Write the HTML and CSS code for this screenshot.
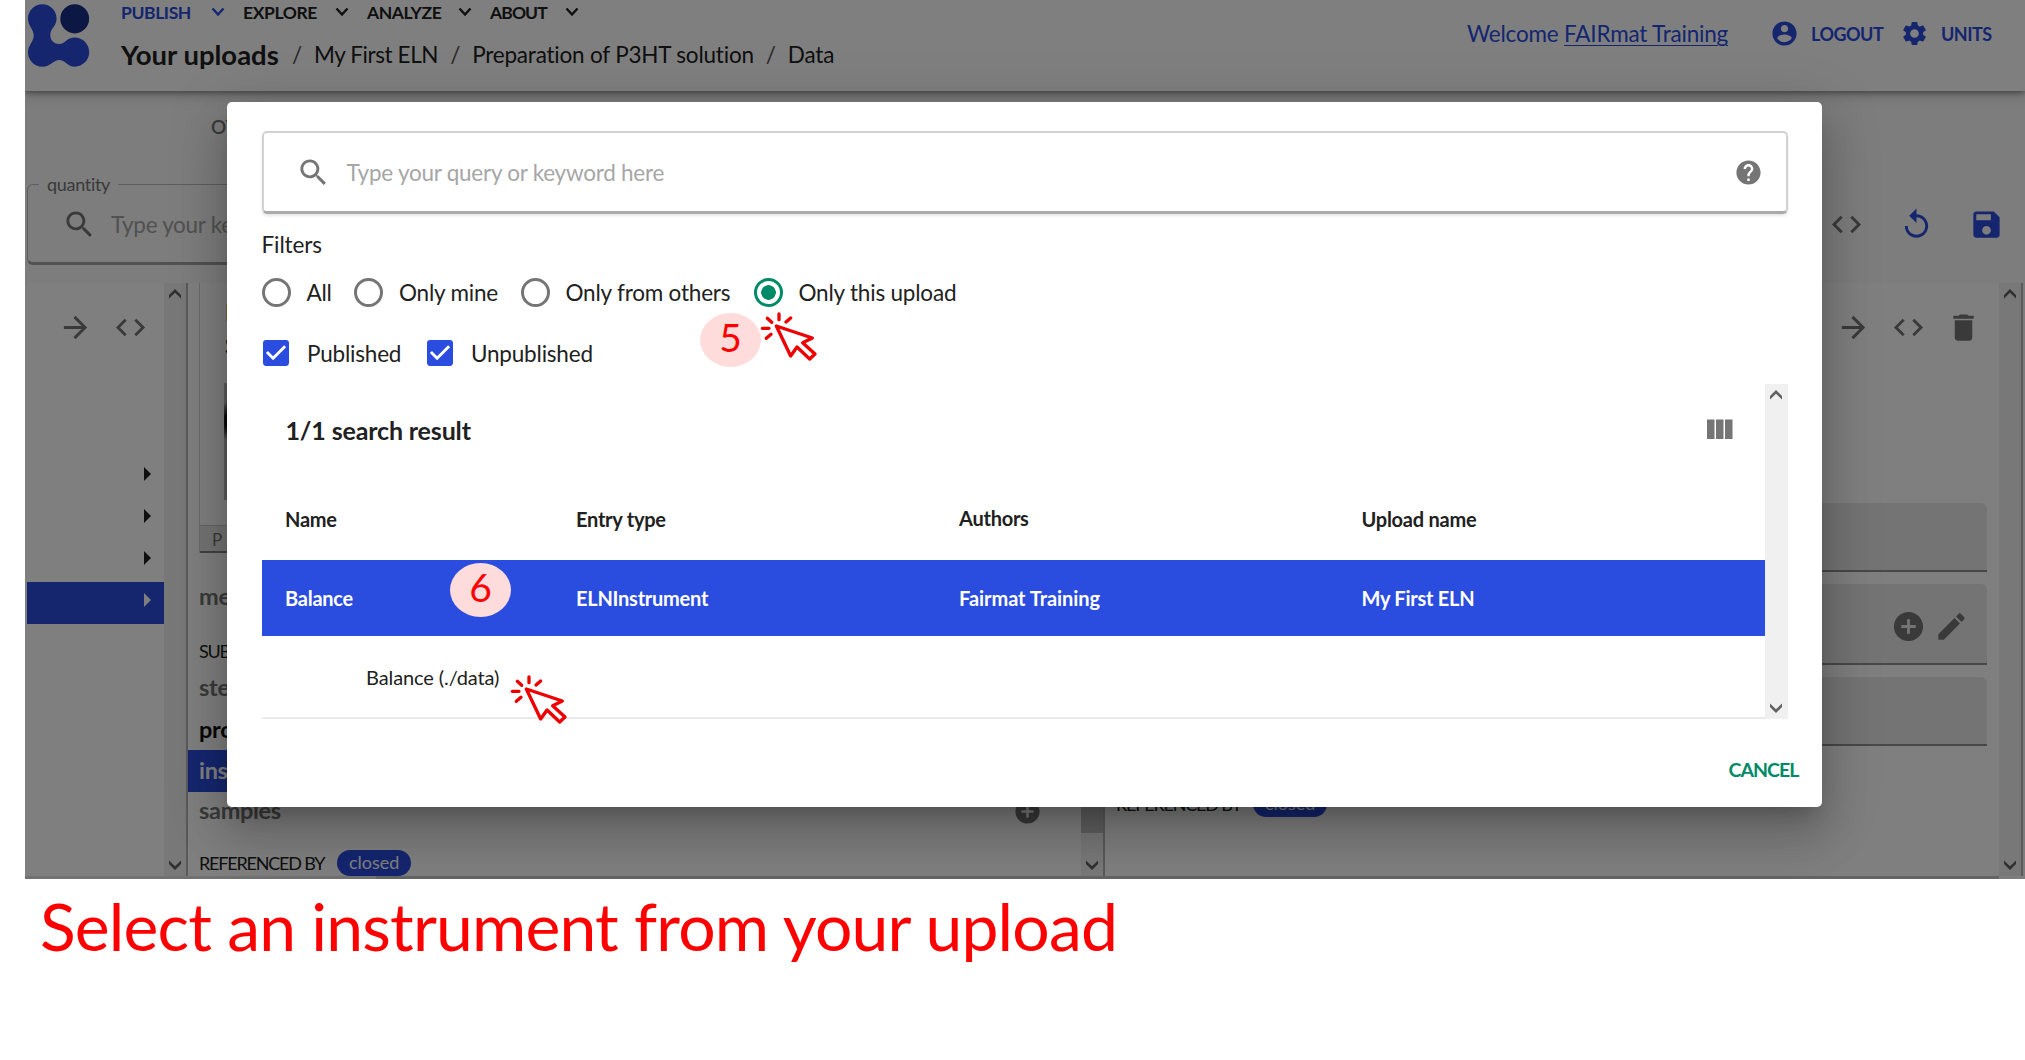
FILE: index.html
```html
<!DOCTYPE html>
<html lang="en">
<head>
<meta charset="utf-8">
<title>Select an instrument</title>
<link rel="stylesheet" href="styles.css">
</head>
<body>
<svg width="0" height="0" class="defs" aria-hidden="true">
  <symbol id="search" viewBox="0 0 24 24"><path d="M15.5 14h-.79l-.28-.27C15.41 12.59 16 11.11 16 9.5 16 5.91 13.09 3 9.5 3S3 5.91 3 9.5 5.91 16 9.5 16c1.61 0 3.09-.59 4.23-1.57l.27.28v.79l5 4.99L20.49 19l-4.99-5zm-6 0C7.01 14 5 11.99 5 9.5S7.01 5 9.5 5 14 7.01 14 9.5 11.99 14 9.5 14z"/></symbol>
  <symbol id="help" viewBox="0 0 24 24"><path d="M12 2C6.48 2 2 6.48 2 12s4.48 10 10 10 10-4.48 10-10S17.52 2 12 2zm1 17h-2v-2h2v2zm2.07-7.75l-.9.92C13.45 12.9 13 13.5 13 15h-2v-.5c0-1.1.45-2.1 1.17-2.83l1.24-1.26c.37-.36.59-.86.59-1.41 0-1.1-.9-2-2-2s-2 .9-2 2H8c0-2.21 1.79-4 4-4s4 1.79 4 4c0 .88-.36 1.68-.93 2.25z"/></symbol>
  <symbol id="account" viewBox="0 0 24 24"><path d="M12 2C6.48 2 2 6.48 2 12s4.48 10 10 10 10-4.48 10-10S17.52 2 12 2zm0 3c1.66 0 3 1.34 3 3s-1.34 3-3 3-3-1.34-3-3 1.34-3 3-3zm0 14.2c-2.5 0-4.71-1.28-6-3.22.03-1.99 4-3.08 6-3.08 1.99 0 5.97 1.09 6 3.08-1.29 1.94-3.5 3.22-6 3.22z"/></symbol>
  <symbol id="gear" viewBox="0 0 24 24"><path d="M19.14 12.94c.04-.3.06-.61.06-.94 0-.32-.02-.64-.07-.94l2.03-1.58c.18-.14.23-.41.12-.61l-1.92-3.32c-.12-.22-.37-.29-.59-.22l-2.39.96c-.5-.38-1.03-.7-1.62-.94l-.36-2.54c-.04-.24-.24-.41-.48-.41h-3.84c-.24 0-.43.17-.47.41l-.36 2.54c-.59.24-1.13.57-1.62.94l-2.39-.96c-.22-.08-.47 0-.59.22L2.74 8.87c-.12.21-.08.47.12.61l2.03 1.58c-.05.3-.09.63-.09.94s.02.64.07.94l-2.03 1.58c-.18.14-.23.41-.12.61l1.92 3.32c.12.22.37.29.59.22l2.39-.96c.5.38 1.03.7 1.62.94l.36 2.54c.05.24.24.41.48.41h3.84c.24 0 .44-.17.47-.41l.36-2.54c.59-.24 1.13-.56 1.62-.94l2.39.96c.22.08.47 0 .59-.22l1.92-3.32c.12-.22.07-.47-.12-.61l-2.01-1.58zM12 15.6c-1.98 0-3.6-1.62-3.6-3.6s1.62-3.6 3.6-3.6 3.6 1.62 3.6 3.6-1.62 3.6-3.6 3.6z"/></symbol>
  <symbol id="code" viewBox="0 0 24 24"><path d="M9.4 16.6L4.8 12l4.6-4.6L8 6l-6 6 6 6 1.4-1.4zm5.2 0l4.6-4.6-4.6-4.6L16 6l6 6-6 6-1.4-1.4z"/></symbol>
  <symbol id="replay" viewBox="0 0 24 24"><path d="M12 5V1L7 6l5 5V7c3.31 0 6 2.69 6 6s-2.69 6-6 6-6-2.69-6-6H4c0 4.42 3.58 8 8 8s8-3.58 8-8-3.58-8-8-8z"/></symbol>
  <symbol id="save" viewBox="0 0 24 24"><path d="M17 3H5c-1.11 0-2 .9-2 2v14c0 1.1.89 2 2 2h14c1.1 0 2-.9 2-2V7l-4-4zm-5 16c-1.66 0-3-1.34-3-3s1.34-3 3-3 3 1.34 3 3-1.34 3-3 3zm3-10H5V5h10v4z"/></symbol>
  <symbol id="arrow" viewBox="0 0 24 24"><path d="M12 4l-1.41 1.41L16.17 11H4v2h12.17l-5.58 5.59L12 20l8-8z"/></symbol>
  <symbol id="trash" viewBox="0 0 24 24"><path d="M6 19c0 1.1.9 2 2 2h8c1.1 0 2-.9 2-2V7H6v12zM19 4h-3.5l-1-1h-5l-1 1H5v2h14V4z"/></symbol>
  <symbol id="add" viewBox="0 0 24 24"><path d="M12 2C6.48 2 2 6.48 2 12s4.48 10 10 10 10-4.48 10-10S17.52 2 12 2zm5 11h-4v4h-2v-4H7v-2h4V7h2v4h4v2z"/></symbol>
  <symbol id="edit" viewBox="0 0 24 24"><path d="M3 17.25V21h3.75L17.81 9.94l-3.75-3.75L3 17.25zM20.71 7.04c.39-.39.39-1.02 0-1.41l-2.34-2.34c-.39-.39-1.02-.39-1.41 0l-1.83 1.83 3.75 3.75 1.83-1.83z"/></symbol>
  <symbol id="columns" viewBox="0 0 24 24"><path d="M10 18h5V5h-5v13zm-6 0h5V5H4v13zM16 5v13h5V5h-5z"/></symbol>
  <symbol id="checkbox" viewBox="3 3 18 18"><path d="M19 3H5c-1.11 0-2 .9-2 2v14c0 1.1.89 2 2 2h14c1.11 0 2-.9 2-2V5c0-1.1-.89-2-2-2zm-9 14l-5-5 1.41-1.41L10 14.17l7.59-7.59L19 8l-9 9z"/></symbol>
  <symbol id="down" viewBox="0 0 14 10"><path d="M1.500 1.500L7 7.500l5.500-6" fill="none" stroke="currentColor" stroke-width="2.400"/></symbol>
  <symbol id="sb-up" viewBox="0 0 12 10"><path d="M0 6L6 0l6 6v3.500L6 3.800 0 9.500z"/></symbol>
  <symbol id="sb-down" viewBox="0 0 12 10"><path d="M0 .5l6 5.700L12 .5V4L6 10 0 4z"/></symbol>
  <symbol id="click" viewBox="0 0 210 180"><g fill="none" stroke="#ee0000" stroke-width="10" stroke-linecap="round" stroke-linejoin="round"><path d="M64 63L172 99l-29 14 37 34-16 15-38-36-19 27z"/><path d="M72 27v17M93 51l14-12M37 40l13 12M22 70h20M34 100l14-12"/></g></symbol>
</svg>

<div class="screen">
  <div class="app">
    <header class="topbar">
      <svg class="logo" viewBox="0 0 62 63"><ellipse cx="46.700" cy="14.800" rx="14.400" ry="14.600" fill="#192e86"/><path fill="#2a4cdf" d="M14.300.2C22.300.2 28.600 6.600 28.600 14.500c0 8-6.300 9.500-6.300 16.500 0 6 4.500 9 9 9 6 0 7.200-6.500 15.400-6.500 8 0 14.500 6.500 14.500 14.600S54.700 62.700 46.700 62.700c-7 0-10-6.700-15.400-6.700s-9 6.700-17 6.700S0 56.200 0 48.200C0 41 5.700 38 5.700 31.500 5.700 25 0 22 0 14.500 0 6.600 6.400.2 14.300.2z"/></svg>
      <div class="titles">
        <nav class="menu">
          <a class="m1 on">PUBLISH<svg><use href="#down"/></svg></a>
          <a class="m2">EXPLORE<svg><use href="#down"/></svg></a>
          <a class="m3">ANALYZE<svg><use href="#down"/></svg></a>
          <a class="m4">ABOUT<svg><use href="#down"/></svg></a>
        </nav>
        <div class="crumbs"><b>Your uploads</b><i>/</i><span class="eln">My First ELN</span><i>/</i><span>Preparation of P3HT solution</span><i>/</i><span>Data</span></div>
      </div>
      <div class="account">
        <span class="welcome">Welcome <u>FAIRmat Training</u></span>
        <svg class="ico29"><use href="#account"/></svg><b class="logout">LOGOUT</b>
        <svg class="ico29"><use href="#gear"/></svg><b>UNITS</b>
      </div>
    </header>
    <div class="tabs">OVERVIEW</div>
    <div class="tools">
      <fieldset class="quantity"><legend>quantity</legend><svg class="ico"><use href="#search"/></svg><span>Type your keyword here</span></fieldset>
      <div class="actions"><svg class="ico"><use href="#code"/></svg><svg class="ico blue"><use href="#replay"/></svg><svg class="ico blue"><use href="#save"/></svg></div>
    </div>
    <main class="lanes">
      <section class="lane tree">
        <div class="lane-body">
          <div class="lane-icons"><svg class="ico"><use href="#arrow"/></svg><svg class="ico"><use href="#code"/></svg></div>
          <div class="node"></div><div class="node"></div><div class="node"></div><div class="node sel"></div>
        </div>
        <div class="sbar"><svg><use href="#sb-up"/></svg><svg><use href="#sb-down"/></svg></div>
      </section>
      <section class="lane detail">
        <div class="lane-body">
          <div class="card">
            <div class="card-title">I<br>S</div>
            <div class="thumb"></div>
            <div class="pfield">P</div>
          </div>
          <div class="prop method">method</div>
          <div class="label sub">SUB SECTIONS</div>
          <div class="prop">steps</div>
          <div class="prop dark">process</div>
          <div class="prop sel">instruments</div>
          <div class="prop last"><span>samples</span><svg class="ico29"><use href="#add"/></svg></div>
          <div class="label refs">REFERENCED BY<em>closed</em></div>
        </div>
        <div class="sbar"><svg><use href="#sb-up"/></svg><div class="sthumb"></div><svg><use href="#sb-down"/></svg></div>
      </section>
      <section class="lane instr">
        <div class="lane-body">
          <div class="lane-icons"><svg class="ico"><use href="#arrow"/></svg><svg class="ico"><use href="#code"/></svg><svg class="ico"><use href="#trash"/></svg></div>
          <div class="fields">
            <div class="field"></div>
            <div class="field"><svg class="ico"><use href="#add"/></svg><svg class="ico"><use href="#edit"/></svg></div>
            <div class="field"></div>
          </div>
          <div class="label refs2">REFERENCED BY<em>closed</em></div>
        </div>
        <div class="sbar"><svg><use href="#sb-up"/></svg><svg><use href="#sb-down"/></svg></div>
      </section>
    </main>
    <div class="hscroll"><div class="hthumb"></div></div>
  </div>
  <div class="backdrop"></div>

  <div class="dialog">
    <div class="query"><svg class="ico"><use href="#search"/></svg><span>Type your query or keyword here</span><svg class="ico29"><use href="#help"/></svg></div>
    <div class="filters">Filters</div>
    <div class="radios">
      <label class="r1"><i class="radio"></i>All</label>
      <label class="r2"><i class="radio"></i>Only mine</label>
      <label class="r3"><i class="radio"></i>Only from others</label>
      <label><i class="radio checked"></i>Only this upload</label>
    </div>
    <div class="checks">
      <label class="c1"><svg><use href="#checkbox"/></svg>Published</label>
      <label><svg><use href="#checkbox"/></svg>Unpublished</label>
    </div>
    <div class="results">
      <div class="table">
        <div class="caption"><span>1/1 search result</span><svg><use href="#columns"/></svg></div>
        <div class="row head"><span>Name</span><span>Entry type</span><span class="authors">Authors</span><span>Upload name</span></div>
        <div class="row active"><span>Balance</span><span>ELNInstrument</span><span class="fair">Fairmat Training</span><span>My First ELN</span></div>
        <div class="subrow">Balance (./data)</div>
      </div>
      <div class="sbar"><svg><use href="#sb-up"/></svg><svg><use href="#sb-down"/></svg></div>
    </div>
    <div class="footer">CANCEL</div>
  </div>

  <div class="step five">5</div>
  <div class="step six">6</div>
  <svg class="click k1"><use href="#click"/></svg>
  <svg class="click k2"><use href="#click"/></svg>
</div>
<p class="note">Select an instrument from your upload</p>
</body>
</html>
```
FILE: styles.css
```css
* { box-sizing: border-box; }
body { margin: 0; background: #fff; font-family: Lato, "Open Sans", sans-serif; color: #212121; overflow: hidden; width: 2025px; height: 1060px; }
svg { display: block; fill: currentColor; flex: none; }
.defs { position: absolute; }
.ico { width: 35px; height: 35px; color: #757575; }
.ico29 { width: 29px; height: 29px; }
.blue { color: #2a4cdf; }
.screen { position: relative; margin-left: 25px; width: 2000px; height: 879px; overflow: hidden; }
.app { height: 879px; display: flex; flex-direction: column; background: #fafafa; }

.topbar { height: 91px; flex: none; display: flex; background: #fff; position: relative; box-shadow: 0 2px 5px rgba(0,0,0,.35), 0 5px 12px rgba(0,0,0,.16); }
.logo { width: 62px; height: 63px; margin: 4px 0 0 3px; }
.titles { margin-left: 31px; flex: 1; }
.menu { display: flex; gap: 18px; height: 24px; font-size: 17.5px; font-weight: 700; letter-spacing: -.4px; }
.menu a { display: flex; justify-content: space-between; align-items: center; }
.menu svg { width: 14px; height: 10px; }
.m1 { width: 104px; } .m2 { width: 106px; } .m3 { width: 105px; } .m4 { width: 89px; letter-spacing: -.9px; }
.on { color: #2a4cdf; }
.crumbs { display: flex; align-items: center; height: 61px; font-size: 22.5px; letter-spacing: -.2px; white-space: nowrap; }
.crumbs b { font-size: 27.5px; font-weight: 700; letter-spacing: 0; width: 159px; }
.crumbs i { font-style: normal; width: 34px; text-align: center; color: #555; }
.crumbs .eln { letter-spacing: -.4px; }
.account { display: flex; align-items: center; height: 67px; width: 558px; color: #2a4cdf; font-size: 18px; letter-spacing: -.5px; }
.welcome { font-size: 22.500px; letter-spacing: -.2px; width: 303px; }
.welcome u { text-decoration-thickness: 1px; text-underline-offset: 3px; }
.account b { font-weight: 700; margin-left: 12px; }
.account .logout { width: 89px; }

.tabs { height: 72px; padding-left: 186px; line-height: 71px; font-size: 19px; font-weight: 600; color: #757575; }
.tools { height: 120px; padding: 11px 0 0 2px; display: flex; justify-content: space-between; }
.quantity { margin: 0; padding: 0 0 7px 34px; width: 600px; height: 91px; border: 1px solid #bdbdbd; border-bottom: 3px solid #a2a2a2; border-radius: 6px; display: flex; align-items: center; gap: 14px; font-size: 22.500px; color: #a3a3a3; letter-spacing: -.3px; }
.quantity span { width: 122px; overflow: hidden; white-space: nowrap; }
.quantity legend { font-size: 18px; color: #757575; padding: 0 8px; margin-left: -23px; line-height: 20px; letter-spacing: -.3px; }
.actions { display: flex; align-items: center; gap: 35px; padding-right: 21px; height: 78px; margin-top: 11px; }

.lanes { display: grid; grid-template-columns: 163px 917px 918px; height: 593px; flex: none; }
.lane { display: grid; grid-template-columns: 1fr 22px; background: #fff; border-right: 2px solid #b5b5b5; border-top-left-radius: 6px; }
.lane-body { overflow: hidden; height: 593px; }
.sbar { background: #f0f0f0; color: #606060; display: flex; flex-direction: column; justify-content: space-between; align-items: center; padding: 6px 0; }
.sbar svg { width: 12px; height: 10px; }
.lane-icons { display: flex; align-items: center; height: 89px; }
.tree .lane-icons { padding-left: 31px; gap: 20px; height: 170px; padding-bottom: 81px; }
.node { height: 42px; display: flex; justify-content: flex-end; align-items: center; padding-right: 13px; }
.node::after { content: ""; border: 7px solid transparent; border-left: 7px solid #212121; border-right: 0; }
.node.sel { background: #2a4cdf; margin-top: 3px; padding-bottom: 7px; }
.node.sel::after { border-left-color: #fff; }
.tree .lane-body { margin-left: 2px; }
.card { margin-left: 11px; height: 270px; border-left: 1px solid #d8d8d8; position: relative; }
.card-title { padding: 13px 0 0 25px; font-size: 23px; font-weight: 700; line-height: 33px; }
.thumb { margin: 21px 0 0 24px; width: 200px; height: 117px; background: radial-gradient(ellipse 9px 20px at 4px 38px, #111 35%, transparent), #b9b9b9; }
.pfield { position: absolute; left: 0; right: 0; top: 242px; height: 28px; background: #e8e8e8; border-top: 1px solid #c9c9c9; border-bottom: 2px solid #858585; padding-left: 12px; font-size: 17px; line-height: 27px; color: #757575; }
.prop { height: 41.500px; line-height: 41.500px; padding-left: 11px; font-size: 23.500px; font-weight: 700; color: #757575; letter-spacing: -.3px; }
.method { height: 78px; line-height: 86px; }
.label { font-size: 18px; letter-spacing: -1.2px; padding-left: 11px; display: flex; align-items: center; white-space: nowrap; }
.sub { height: 36px; padding-top: 4px; }
.dark { color: #111; }
.prop.sel { background: #2a4cdf; color: #fff; }
.last { display: flex; justify-content: space-between; align-items: center; padding-right: 39px; height: 39px; }
.label em { font-style: normal; background: #2a4cdf; color: #fff; width: 74px; height: 26px; border-radius: 13px; text-align: center; line-height: 25px; margin-left: 13px; letter-spacing: 0; }
.refs { height: 62px; padding-top: 3px; }
.sthumb { width: 22px; background: #c1c1c1; height: 500px; margin: 28px 0 21px; }
.instr .lane-icons { justify-content: flex-end; padding-right: 18px; gap: 20px; }
.fields { display: flex; flex-direction: column; gap: 12px; padding: 131px 12px 0 12px; }
.field { height: 69px; background: #e8e8e8; border-bottom: 2px solid #909090; border-radius: 6px 6px 0 0; display: flex; justify-content: flex-end; align-items: center; padding: 5px 18px 0 0; gap: 8px; }
.field:nth-child(2) { height: 81px; }
.refs2 { height: 26px; margin-top: 45px; }
.instr em { margin-left: 12px; }
.hscroll { height: 3px; background: #e2e2e2; padding-left: 351px; width: 1974px; }
.hthumb { height: 3px; background: #c9c9c9; }
.backdrop { position: absolute; inset: 0; background: rgba(0,0,0,.5); }

.dialog { position: absolute; left: 202px; top: 102px; width: 1595px; height: 705px; background: #fff; border-radius: 5px; padding: 29px 34.500px 0 34.500px; box-shadow: 0 13px 18px -8px rgba(0,0,0,.2), 0 29px 46px 4px rgba(0,0,0,.14), 0 11px 56px 10px rgba(0,0,0,.12); }
.query { height: 83px; border: 2px solid #d2d2d2; border-bottom: 3px solid #aaa; border-radius: 5px; display: flex; align-items: center; padding: 0 23px 0 32px; font-size: 22.500px; letter-spacing: -.25px; color: #a6a6a6; box-shadow: 0 2px 3px rgba(0,0,0,.1); }
.query span { flex: 1; margin-left: 16px; }
.query .ico29 { color: #757575; }
.filters { height: 30px; line-height: 30px; margin-top: 16px; font-size: 22.500px; letter-spacing: -.1px; }
.radios, .checks { display: flex; height: 36px; font-size: 22.500px; letter-spacing: -.2px; white-space: nowrap; }
.radios { margin-top: 14px; }
.radios label, .checks label { display: flex; align-items: center; }
.radio { width: 29px; height: 29px; border-radius: 50%; border: 3px solid #757575; margin-right: 16px; }
.checked { border-color: #008a67; background: radial-gradient(circle, #008a67 7px, transparent 7.500px); }
.r1 { width: 92.500px; } .r2 { width: 166.500px; } .r3 { width: 233px; }
.checks { margin-top: 25px; padding-left: 1.500px; }
.checks svg { width: 26px; height: 26px; color: #2a4cdf; margin-right: 18px; }
.c1 { width: 164px; }
.results { display: grid; grid-template-columns: 1fr 23px; height: 335px; margin-top: 13px; }
.table { border-bottom: 2px solid #eaeaea; height: 335px; }
.caption { height: 94px; padding: 0 28px 2px 24px; display: flex; align-items: center; justify-content: space-between; font-size: 25px; font-weight: 700; letter-spacing: -.15px; }
.caption svg { width: 36px; height: 36px; color: #757575; }
.row { display: grid; grid-template-columns: 291px 383px 402.500px 1fr; padding-left: 23.500px; font-size: 20px; font-weight: 700; letter-spacing: -.25px; align-items: center; }
.head { height: 82px; }
.authors { padding-bottom: 2px; }
.active { height: 76px; background: #2a4cdf; color: #fff; }
.fair { letter-spacing: -.05px; }
.subrow { height: 81px; line-height: 82px; padding-left: 104.500px; font-size: 20px; letter-spacing: -.1px; }
.footer { height: 88px; line-height: 101px; margin-right: -11px; text-align: right; font-size: 19.500px; font-weight: 700; letter-spacing: -.95px; color: #008a67; }

.step { position: absolute; width: 61px; height: 54px; border-radius: 50%; background: #ffdcdc; color: #f00; font-size: 39px; line-height: 49px; text-align: center; }
.five { left: 675px; top: 313px; }
.six { left: 425px; top: 563px; }
.click { position: absolute; width: 70px; height: 60px; }
.k1 { left: 730px; top: 305px; }
.k2 { left: 479.500px; top: 668px; }
.note { margin: -3px 0 0 40px; font-size: 66px; line-height: 100px; letter-spacing: -.82px; color: #f00; white-space: nowrap; }
```
